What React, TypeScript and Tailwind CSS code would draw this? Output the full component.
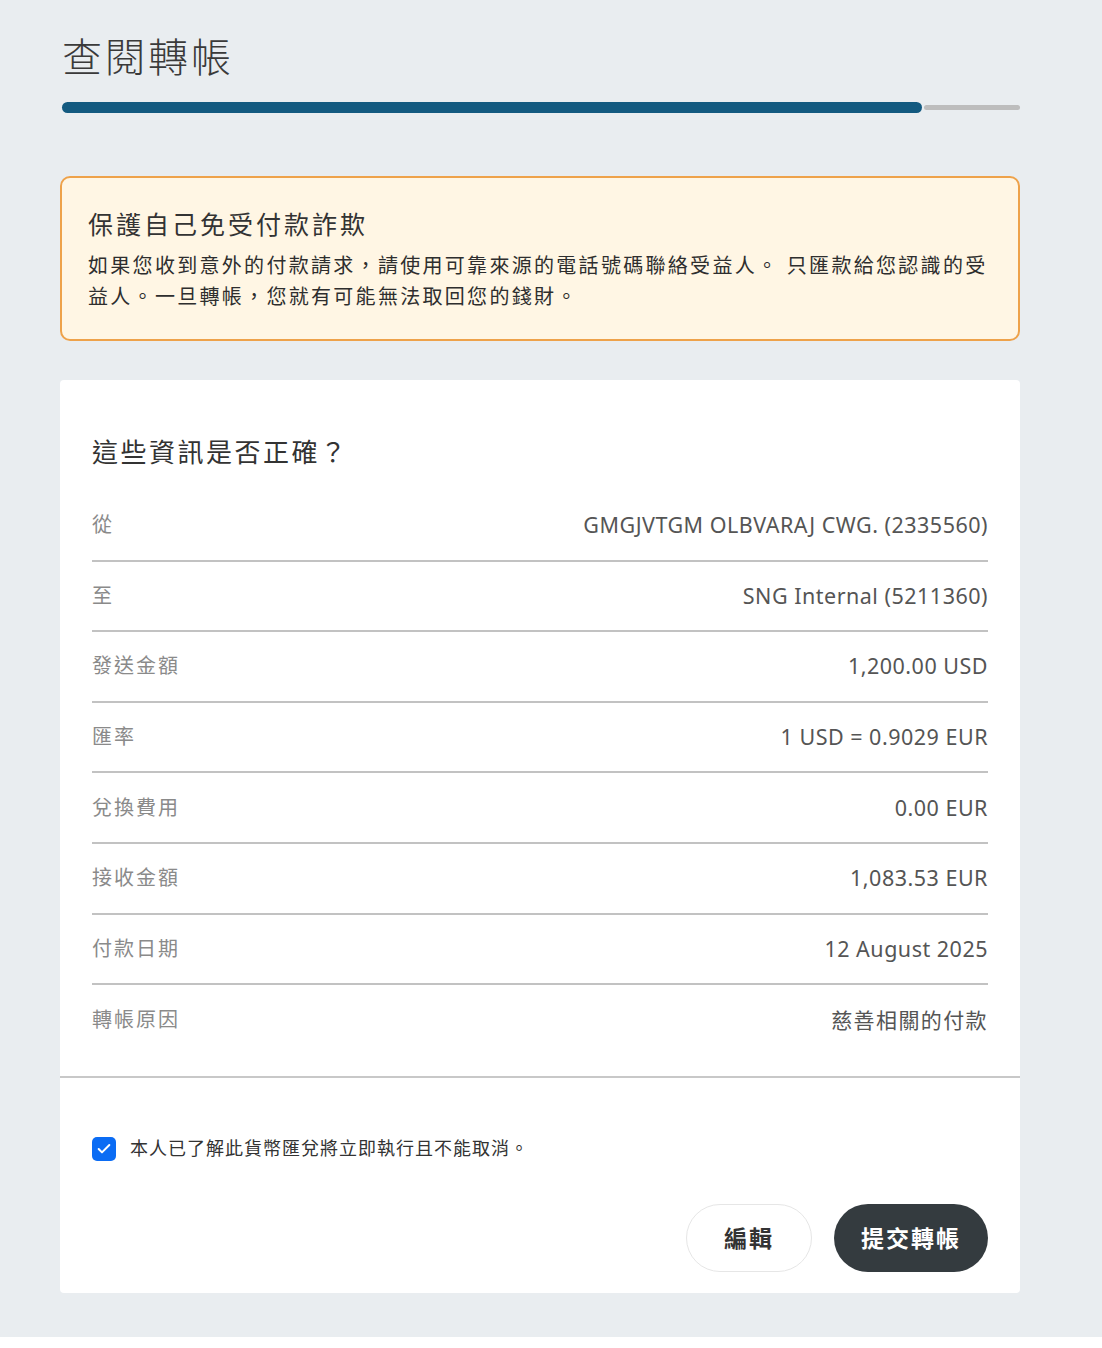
import { Check } from "lucide-react";

const rows = [
  { label: "從", value: "GMGJVTGM OLBVARAJ CWG. (2335560)" },
  { label: "至", value: "SNG Internal (5211360)" },
  { label: "發送金額", value: "1,200.00 USD" },
  { label: "匯率", value: "1 USD = 0.9029 EUR" },
  { label: "兌換費用", value: "0.00 EUR" },
  { label: "接收金額", value: "1,083.53 EUR" },
  { label: "付款日期", value: "12 August 2025" },
  { label: "轉帳原因", value: "慈善相關的付款", cjk: true },
];

export default function App() {
  return (
    <div className="bg-white">
      <div
        className="bg-[#e9edf0] pt-[30px] pb-[44px] pl-[60px]"
        style={{ fontFamily: '"Noto Sans", "Noto Sans CJK TC", sans-serif' }}
      >
        <div className="w-[960px]">
          <h1 className="text-[40px] leading-[54px] font-light tracking-[3px] text-[#3a3a3a] pl-[2px]">
            查閱轉帳
          </h1>

          {/* progress */}
          <div className="mt-[18px] flex items-center pl-[2px] gap-[2px]">
            <div className="h-[11px] w-[860px] rounded-full bg-[#135a80]" />
            <div className="h-[5px] flex-1 rounded-full bg-[#bdbdbd]" />
          </div>

          {/* warning */}
          <div className="mt-[63px] h-[165px] rounded-[10px] border-2 border-[#eea24a] bg-[#fff6e4] px-[26px] pt-[28px]">
            <h2 className="text-[25px] leading-[36px] tracking-[3px] text-[#333]">保護自己免受付款詐欺</h2>
            <p className="mt-[8px] text-[20px] leading-[31px] tracking-[2.3px] text-[#2e2e2e]">
              如果您收到意外的付款請求，請使用可靠來源的電話號碼聯絡受益人。 只匯款給您認識的受益人。一旦轉帳，您就有可能無法取回您的錢財。
            </p>
          </div>

          {/* card */}
          <div className="mt-[39px] rounded-[4px] bg-white">
            <div className="px-[32px] pt-[52px]">
              <h2 className="text-[26px] leading-[40px] tracking-[2.5px] text-[#333]">這些資訊是否正確？</h2>
              <div className="mt-[19px]">
                {rows.map((r, i) => (
                  <div
                    key={r.label}
                    className={`flex h-[70.6px] items-center justify-between ${
                      i < rows.length - 1 ? "border-b-2 border-[#c2c2c2]" : ""
                    }`}
                  >
                    <span className="text-[20px] tracking-[2px] text-[#8a8a8a]">{r.label}</span>
                    <span
                      className={`text-[#555] ${
                        r.cjk ? "text-[21px] tracking-[1.4px]" : "text-[21.5px] tracking-[0.5px]"
                      }`}
                    >
                      {r.value}
                    </span>
                  </div>
                ))}
              </div>
            </div>
            <div className="mt-[20px] border-t-2 border-[#c8c8c8]" />
            <div className="px-[32px] pb-[21px]">
              <label className="mt-[59px] flex h-[24px] items-center gap-[14px]">
                <span className="flex h-[24px] w-[24px] items-center justify-center rounded-[5px] bg-[#0b6cf4]">
                  <Check size={16} strokeWidth={3} color="white" />
                </span>
                <span className="text-[18px] tracking-[1px] text-[#333]">
                  本人已了解此貨幣匯兌將立即執行且不能取消。
                </span>
              </label>
              <div className="mt-[43px] flex justify-end gap-[22px]">
                <button className="h-[68px] w-[126px] rounded-full border border-[#e6e6e6] bg-white text-[23px] font-semibold tracking-[2px] text-[#333]">
                  編輯
                </button>
                <button className="h-[68px] w-[154px] rounded-full bg-[#343b3f] text-[23px] font-semibold tracking-[2px] text-white">
                  提交轉帳
                </button>
              </div>
            </div>
          </div>
        </div>
      </div>
    </div>
  );
}
